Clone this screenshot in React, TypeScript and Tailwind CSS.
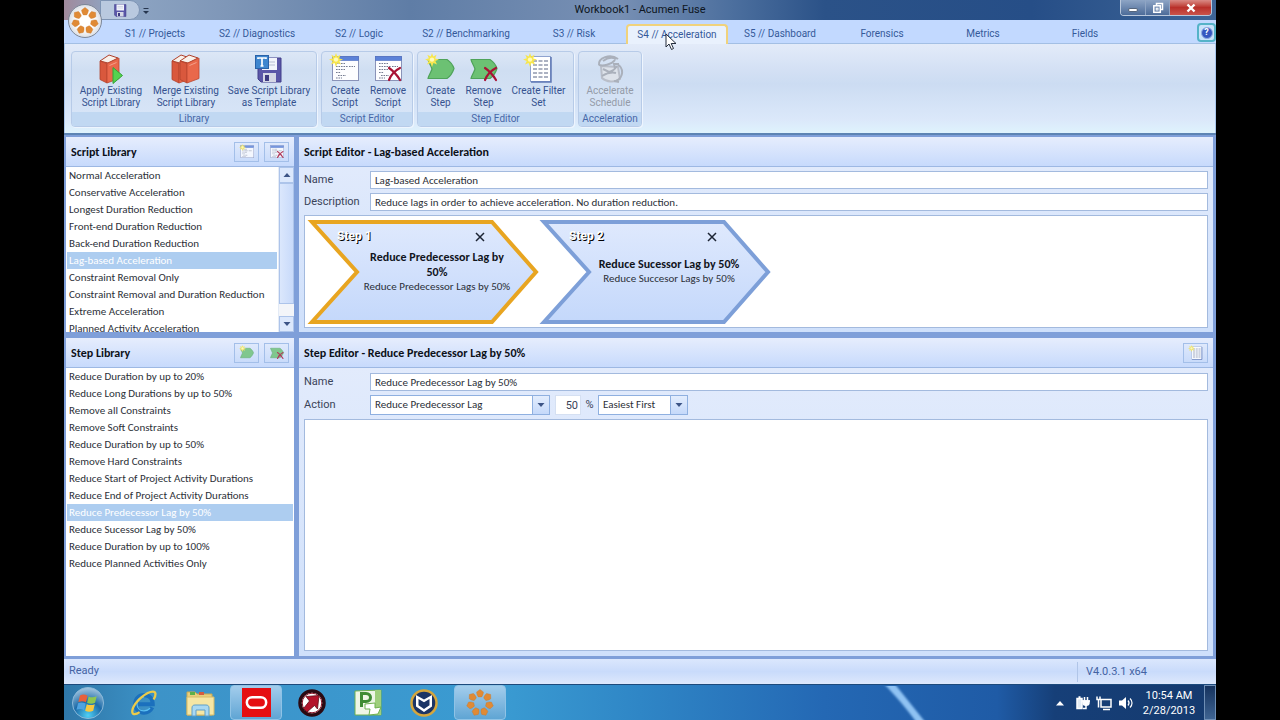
import type { ReactNode } from "react";

const PETALS = [0, 1, 2, 3, 4, 5, 6];

function AcumenMark({ className }: { className: string }) {
  return (
    <svg viewBox="0 0 32 32" className={className} aria-hidden="true">
      {PETALS.map((i) => (
        <path
          key={i}
          d="M16 1.500l3.600 2.700c0 2-.6 3.600-1.800 5.300h-3.600c-1.200-1.700-1.800-3.300-1.800-5.300z"
          fill="#e08a35"
          stroke="#c97526"
          strokeWidth=".4"
          strokeLinejoin="round"
          transform={`rotate(${(i * 360) / 7} 16 16)`}
        />
      ))}
    </svg>
  );
}

function Spark() {
  return (
    <g>
      <path
        d="M7 0l1.300 3.600L11.500 1.800 10.200 5.400 14 6.500l-3.600 1.400 1.600 3.600-3.600-1.500L7 14l-1.400-4L2 11.500l1.700-3.600L0 6.500l3.800-1.200L2.300 1.800l3.400 1.800z"
        fill="#f7e64e"
      />
      <circle cx="7" cy="6.600" r="2.200" fill="#fffbb8" />
    </g>
  );
}

function Cross() {
  return (
    <path
      d="M17 15c3 2 8 7 11 12M28 15c-4 2-9 7-11 12"
      stroke="#a81235"
      strokeWidth="2.200"
      fill="none"
      strokeLinecap="round"
    />
  );
}

function Book({ x = 0 }: { x?: number }) {
  return (
    <g transform={`translate(${x} 0)`}>
      <path d="M5 8l9-6 9 3-10 5z" fill="#f8f1ea" stroke="#b0412c" strokeWidth="1" />
      <path d="M5 8l7 2.500V30l-7-3.500z" fill="#d9583d" stroke="#b0412c" strokeWidth=".8" />
      <path d="M12 10.500L24 5v20.500L12 30z" fill="#e9684b" stroke="#bc4730" strokeWidth=".8" />
      <path d="M14.500 12.500l7-3" stroke="#f3a08a" strokeWidth="1" />
    </g>
  );
}

function Icon({ size, children }: { size: string; children: ReactNode }) {
  return (
    <svg viewBox="0 0 32 32" className={size} aria-hidden="true">
      {children}
    </svg>
  );
}

function ScriptWindow() {
  return (
    <g>
      <rect x="3.500" y="3.500" width="26" height="24" fill="#fdfdff" stroke="#8a93b8" />
      <rect x="3.500" y="3.500" width="26" height="4" fill="#5c82d8" stroke="#4a6cc0" strokeWidth=".6" />
      <path
        d="M7 10.500h9M7 13.500h12M7 16.500h9M7 19.500h5M9 22.500h8M20 13.500h6M7 25h6"
        stroke="#747b91"
        strokeWidth="1.200"
        strokeDasharray="1.600 .9"
      />
    </g>
  );
}

function StepShape() {
  return (
    <path
      d="M3 6.500h19c3 2 6 6 7 9-1 3-4 8-7 10H3c1-4 3-6 4-9.500-1-3.500-3-5.500-4-9.500z"
      fill="#6cc173"
      stroke="#4fa35a"
      strokeWidth="1.200"
      strokeLinejoin="round"
    />
  );
}

function FilterSheet() {
  return (
    <g>
      <rect x="7.500" y="3.500" width="20" height="25" fill="#fff" stroke="#8fa3cf" />
      <path d="M28 4v25H8" stroke="#5f78b5" strokeWidth="1.500" fill="none" />
      <path
        d="M10 8h15M10 12h15M10 16h15M10 20h15M10 24h15"
        stroke="#5b6686"
        strokeWidth="1.200"
        strokeDasharray="4 1.500"
      />
    </g>
  );
}

function Floppy() {
  return (
    <g>
      <path d="M5 5h23v24H8l-3-3z" fill="#5b57a8" stroke="#433f8a" />
      <rect x="9" y="5" width="15" height="12" fill="#f2f4fb" />
      <path d="M11 9h11M11 12h11" stroke="#b6bdd2" />
      <rect x="10" y="20" width="13" height="9" fill="#d5d8e6" />
      <rect x="12" y="22" width="4" height="6" fill="#3d3a80" />
    </g>
  );
}

const icons: Record<string, ReactNode> = {
  apply: (
    <g>
      <Book />
      <path d="M18 14.500l9.500 8-9.500 8z" fill="#55d24f" stroke="#35a338" />
    </g>
  ),
  merge: (
    <g>
      <Book x={-3} />
      <Book x={5} />
    </g>
  ),
  template: (
    <g>
      <Floppy />
      <rect x="2.500" y="2.500" width="13" height="13" fill="#3e86cf" stroke="#2a62a8" />
      <path d="M5 6V5h8v1M9 5v8M7.500 13h3" stroke="#fff" strokeWidth="1.700" fill="none" />
    </g>
  ),
  createScript: (
    <g>
      <ScriptWindow />
      <Spark />
    </g>
  ),
  removeScript: (
    <g>
      <ScriptWindow />
      <Cross />
    </g>
  ),
  createStep: (
    <g>
      <StepShape />
      <Spark />
    </g>
  ),
  removeStep: (
    <g>
      <StepShape />
      <Cross />
    </g>
  ),
  filter: (
    <g>
      <FilterSheet />
      <Spark />
    </g>
  ),
  accelerate: (
    <g fill="none" stroke="#aab0bb" strokeWidth="2">
      <path d="M7 13l1 12c4 4 13 5 18 1l-2-12z" fill="#dde2ea" stroke="#b9bec9" />
      <path d="M5 12C4 5 16 0 24 6M5 12c4 1 12 0 16-5M9 8c4-3 9-4 13-2" />
      <path d="M9 16l6 3c4-1 6-3 8-6M8 23c5-3 10-4 14-3" />
      <path d="M23 11c7 4 7 13-1 17M20 28l5 1M25 11h-5l1 4" />
    </g>
  ),
};

const tabs = [
  { label: "S1 // Projects", width: "w-[102px]" },
  { label: "S2 // Diagnostics", width: "w-[102px]" },
  { label: "S2 // Logic", width: "w-[102px]" },
  { label: "S2 // Benchmarking", width: "w-[112px]" },
  { label: "S3 // Risk", width: "w-[104px]" },
  { label: "S4 // Acceleration", width: "w-[102px]", active: true },
  { label: "S5 // Dashboard", width: "w-[104px]" },
  { label: "Forensics", width: "w-[100px]" },
  { label: "Metrics", width: "w-[102px]" },
  { label: "Fields", width: "w-[102px]" },
];

const groups = [
  {
    title: "Library",
    width: "w-[246px]",
    items: [
      { icon: "apply", lines: ["Apply Existing", "Script Library"], width: "w-[74px]" },
      { icon: "merge", lines: ["Merge Existing", "Script Library"], width: "w-[76px]" },
      { icon: "template", lines: ["Save Script Library", "as Template"], width: "w-[90px]" },
    ],
  },
  {
    title: "Script Editor",
    width: "w-[92px]",
    items: [
      { icon: "createScript", lines: ["Create", "Script"], width: "w-[42px]" },
      { icon: "removeScript", lines: ["Remove", "Script"], width: "w-[44px]" },
    ],
  },
  {
    title: "Step Editor",
    width: "w-[157px]",
    items: [
      { icon: "createStep", lines: ["Create", "Step"], width: "w-[42px]" },
      { icon: "removeStep", lines: ["Remove", "Step"], width: "w-[44px]" },
      { icon: "filter", lines: ["Create Filter", "Set"], width: "w-[66px]" },
    ],
  },
  {
    title: "Acceleration",
    width: "w-[64px]",
    items: [
      { icon: "accelerate", lines: ["Accelerate", "Schedule"], width: "w-[58px]", disabled: true },
    ],
  },
];

const scripts = [
  "Normal Acceleration",
  "Conservative Acceleration",
  "Longest Duration Reduction",
  "Front-end Duration Reduction",
  "Back-end Duration Reduction",
  "Lag-based Acceleration",
  "Constraint Removal Only",
  "Constraint Removal and Duration Reduction",
  "Extreme Acceleration",
  "Planned Activity Acceleration",
];

const steps = [
  "Reduce Duration by up to 20%",
  "Reduce Long Durations by up to 50%",
  "Remove all Constraints",
  "Remove Soft Constraints",
  "Reduce Duration by up to 50%",
  "Remove Hard Constraints",
  "Reduce Start of Project Activity Durations",
  "Reduce End of Project Activity Durations",
  "Reduce Predecessor Lag by 50%",
  "Reduce Sucessor Lag by 50%",
  "Reduce Duration by up to 100%",
  "Reduce Planned Activities Only",
];

function TitleBar() {
  return (
    <div className="relative flex h-5 items-center justify-center bg-[linear-gradient(to_right,#a08a9c_0,#8fa6c4_4%,#7f97b8_14%,#5f7da6_30%,#7890b4_48%,#4c6f9e_58%,#2b5288_66%,#264e87_84%,#3e6597_100%)]">
      <div className="absolute left-9 top-0 flex h-5 w-10 items-center justify-center rounded-r-full border border-[#7e94b4] bg-[#b9c9df]">
        <button aria-label="Save" className="flex">
          <Icon size="size-4">
            <Floppy />
          </Icon>
        </button>
      </div>
      <button aria-label="Customize toolbar" className="absolute left-[77px] top-1.5 flex">
        <svg viewBox="0 0 10 10" className="size-2.5" aria-hidden="true">
          <path d="M2.500 2.500h5" stroke="#26364f" />
          <path d="M2 5h6L5 8z" fill="#26364f" />
        </svg>
      </button>
      <h1 className="text-[11px] leading-5 text-[#0d1520]">Workbook1 - Acumen Fuse</h1>
      <div className="absolute right-1 top-0 flex h-4 overflow-hidden rounded-b border border-t-0 border-[#b9c8dc]">
        <button aria-label="Minimize" className="flex w-[25px] items-center justify-center border-r border-[#8fa5c4] bg-linear-to-b from-[#8ea5c5] to-[#4d6c99]">
          <span className="mt-1 h-1 w-2.5 rounded-sm border border-[#55657c] bg-white" />
        </button>
        <button aria-label="Restore" className="flex w-6 items-center justify-center border-r border-[#8fa5c4] bg-linear-to-b from-[#8ea5c5] to-[#4d6c99]">
          <svg viewBox="0 0 12 12" className="size-3" fill="none" stroke="#fff" strokeWidth="1.500" aria-hidden="true">
            <path d="M4.500 3.500v-2h6v6h-2" />
            <rect x="1.800" y="3.800" width="6.500" height="6.500" />
            <rect x="4.200" y="6.200" width="1.800" height="1.800" strokeWidth="1" />
          </svg>
        </button>
        <button aria-label="Close" className="flex w-[41px] items-center justify-center bg-linear-to-b from-[#d98a86] via-[#b92f2a] to-[#c9534a]">
          <svg viewBox="0 0 12 12" className="size-3" aria-hidden="true">
            <path d="M2.500 2.500l7 7M9.500 2.500l-7 7" stroke="#fff" strokeWidth="2.400" />
          </svg>
        </button>
      </div>
      <button
        aria-label="Application menu"
        className="absolute left-1 top-1 z-10 flex size-[34px] items-center justify-center rounded-full border border-[#7d8798] bg-radial from-white from-40% to-[#bdc4d0]"
      >
        <AcumenMark className="size-[30px]" />
      </button>
    </div>
  );
}

function TabStrip() {
  return (
    <nav className="relative flex h-6 shrink-0 items-end border-b border-[#a3bfe4] bg-[#c2d9ff] pl-10">
      {tabs.map((t) => (
        <button
          key={t.label}
          className={`${t.width} -mb-px whitespace-nowrap text-center text-[10px] text-[#35599a] ${
            t.active
              ? "relative h-5 rounded-t border-2 border-b-0 border-[#f0d27c] bg-[#e9f1fd] leading-4"
              : "h-5 leading-5"
          }`}
        >
          {t.label}
          {t.active && (
            <svg viewBox="0 0 12 18" className="absolute left-[37px] top-[7px] z-20 h-[18px] w-3" aria-hidden="true">
              <path d="M1 1v13l3-3 2.500 5.500 2-1-2.300-5H11z" fill="#fff" stroke="#222b3a" />
            </svg>
          )}
        </button>
      ))}
      <button
        aria-label="Help"
        className="absolute right-0 top-[3px] flex size-[19px] items-center justify-center rounded-sm border-2 border-[#55b3c8] bg-[#c9e2fa]"
      >
        <span className="flex size-3 items-center justify-center rounded-full border border-[#8fa9e0] bg-[#3557c0] text-[9px] font-bold leading-none text-white">
          ?
        </span>
      </button>
    </nav>
  );
}

function Ribbon() {
  return (
    <div className="shrink-0 border-x border-[#a9c6ec] bg-[linear-gradient(to_bottom,#e3ebf9_0,#d3e0f4_30%,#ccdcf2_45%,#dbe8fa_85%,#dff3fd_100%)] px-1.5 pb-1.5 pt-[7px]">
      <div className="flex gap-1">
        {groups.map((g) => (
          <section
            key={g.title}
            className={`${g.width} overflow-hidden rounded border border-[#b7cbe8] bg-[linear-gradient(to_bottom,#dce7f6_0,#cfdef2_25%,#d9e6f8_100%)] shadow-[1px_1px_0_#eef5fe]`}
          >
            <div className="flex h-[60px] justify-center">
              {g.items.map((b) => (
                <button
                  key={b.lines.join(" ")}
                  disabled={"disabled" in b}
                  className={`${b.width} flex flex-col items-center whitespace-nowrap text-[10px] leading-3 ${
                    "disabled" in b ? "text-[#949ba8]" : "text-[#35528f]"
                  }`}
                >
                  <Icon size="mt-px size-8">{icons[b.icon]}</Icon>
                  <span>{b.lines[0]}</span>
                  <span>{b.lines[1]}</span>
                </button>
              ))}
            </div>
            <h2 className="h-[14px] bg-[#c1d8f2] text-center text-[10px] leading-[14px] text-[#4767a8]">{g.title}</h2>
          </section>
        ))}
      </div>
    </div>
  );
}

function Panel({ title, actions, children }: { title: string; actions?: ReactNode; children: ReactNode }) {
  return (
    <section className="flex min-h-0 min-w-0 flex-col overflow-hidden bg-linear-to-b from-[#e4ecfc] to-[#cfe0fb]">
      <header className="flex h-[30px] shrink-0 items-center gap-[5px] border-b border-[#9db8e3] bg-linear-to-b from-[#e6edfd] to-[#c7dafc] px-[5px]">
        <h2 className="grow font-[Carlito,Lato,sans-serif] text-[12px] font-bold text-[#0c1018]">{title}</h2>
        {actions}
      </header>
      {children}
    </section>
  );
}

function ToolButton({ label, icon }: { label: string; icon: string }) {
  return (
    <button
      aria-label={label}
      className="flex h-5 w-[25px] items-center justify-center border border-[#a3bfe9] bg-linear-to-b from-[#dfe9fc] to-[#c9dbfa]"
    >
      <Icon size="size-4 opacity-80">{icons[icon]}</Icon>
    </button>
  );
}

function List({ items, selected }: { items: string[]; selected: string }) {
  return (
    <ul className="min-w-0 grow overflow-hidden bg-white px-px font-[Carlito,Lato,sans-serif] text-[11px] leading-[17px] text-[#2c3038]">
      {items.map((s, i) => (
        <li key={i} className={`whitespace-nowrap pl-0.5 ${s === selected ? "bg-[#adcdf0] text-white" : ""}`}>
          {s}
        </li>
      ))}
    </ul>
  );
}

function Arrow({ up = false }: { up?: boolean }) {
  return (
    <svg viewBox="0 0 8 6" className={`h-1.5 w-2 ${up ? "rotate-180" : ""}`} aria-hidden="true">
      <path d="M.500 1h7L4 5z" fill="#3c5486" />
    </svg>
  );
}

function ScrollBar() {
  return (
    <div className="flex w-4 shrink-0 flex-col border-l border-[#e4ebf6] bg-[#f3f5f9]">
      <button aria-label="Scroll up" className="flex h-4 shrink-0 items-center justify-center border border-[#adc4ea] bg-[#dce8fc]">
        <Arrow up />
      </button>
      <div className="h-[121px] border border-[#adc4ea] bg-linear-to-r from-[#dbe7fc] to-[#c8dafa]" />
      <div className="grow" />
      <button aria-label="Scroll down" className="flex h-4 shrink-0 items-center justify-center border border-[#adc4ea] bg-[#dce8fc]">
        <Arrow />
      </button>
    </div>
  );
}

function StepCard({ name, title, note, color }: { name: string; title: string; note: string; color: string }) {
  return (
    <article className="relative flex h-[104px] w-[232px] items-center">
      <svg viewBox="0 0 232 104" className="absolute inset-0 size-full" aria-hidden="true">
        <defs>
          <linearGradient id="stepFill" x1="0" y1="0" x2="0" y2="1">
            <stop offset="0" stopColor="#dfe9fd" />
            <stop offset="1" stopColor="#c4d8fb" />
          </linearGradient>
        </defs>
        <path d="M5 2h180l44 50-44 50H5l45-50z" fill="url(#stepFill)" stroke={color} strokeWidth="4" />
      </svg>
      <h3 className="absolute left-[30px] top-2 text-[12px] font-bold leading-4 text-white [text-shadow:1px_1px_0_#000]">
        {name}
      </h3>
      <button aria-label={`Delete ${name}`} className="absolute left-[168px] top-3 flex">
        <svg viewBox="0 0 10 10" className="size-2.5" aria-hidden="true">
          <path d="M1 1l8 8M9 1L1 9" stroke="#1c2433" strokeWidth="1.500" />
        </svg>
      </button>
      <div className="relative ml-[54px] w-[152px] text-center font-[Carlito,Lato,sans-serif]">
        <p className="text-[12px] font-bold leading-[15px] text-[#10141c]">{title}</p>
        <p className="whitespace-nowrap text-[11px] leading-[14px] text-[#2c3038]">{note}</p>
      </div>
    </article>
  );
}

const labelClass = "w-[66px] shrink-0 text-[11px] text-[#3a4358]";
const fieldClass =
  "h-[18px] min-w-0 grow border border-[#a3bade] bg-white px-1 font-[Carlito,Lato,sans-serif] text-[11px] leading-4 text-[#2c3038]";

function Combo({ id, label, value, width }: { id: string; label: string; value: string; width: string }) {
  return (
    <div className={`relative flex h-5 ${width}`}>
      <select
        id={id}
        aria-label={label}
        defaultValue={value}
        className="h-5 w-full appearance-none border border-[#8fb0e0] bg-white px-1 py-0 font-[Carlito,Lato,sans-serif] text-[11px] leading-4 text-[#2c3038]"
      >
        <option>{value}</option>
      </select>
      <span className="pointer-events-none absolute inset-y-0 right-0 flex w-[18px] items-center justify-center border border-[#8fb0e0] bg-linear-to-b from-[#e3edfd] to-[#c5d9fa]">
        <Arrow />
      </span>
    </div>
  );
}

function Workspace() {
  return (
    <main className="grid min-h-0 grow grid-cols-[228px_1fr] grid-rows-[195px_1fr] gap-x-[5px] gap-y-1.5 border-t-2 border-[#5d84b4] bg-[#7f9fd9] pb-[3px] pl-0.5 pr-[3px] pt-0.5">
      <Panel
        title="Script Library"
        actions={
          <>
            <ToolButton label="Create script" icon="createScript" />
            <ToolButton label="Remove script" icon="removeScript" />
          </>
        }
      >
        <div className="flex min-h-0 grow">
          <List items={scripts} selected="Lag-based Acceleration" />
          <ScrollBar />
        </div>
      </Panel>

      <Panel title="Script Editor - Lag-based Acceleration">
        <div className="flex min-h-0 grow flex-col gap-1 px-[5px] py-1">
          <div className="flex items-center">
            <label htmlFor="script-name" className={labelClass}>Name</label>
            <input id="script-name" className={fieldClass} defaultValue="Lag-based Acceleration" />
          </div>
          <div className="flex items-center">
            <label htmlFor="script-description" className={labelClass}>Description</label>
            <input
              id="script-description"
              className={fieldClass}
              defaultValue="Reduce lags in order to achieve acceleration. No duration reduction."
            />
          </div>
          <div className="flex min-h-0 grow items-center border border-[#a3bade] bg-white pl-0.5">
            <StepCard
              name="Step 1"
              title="Reduce Predecessor Lag by 50%"
              note="Reduce Predecessor Lags by 50%"
              color="#e8a521"
            />
            <StepCard
              name="Step 2"
              title="Reduce Sucessor Lag by 50%"
              note="Reduce Succesor Lags by 50%"
              color="#7d9fd8"
            />
          </div>
        </div>
      </Panel>

      <Panel
        title="Step Library"
        actions={
          <>
            <ToolButton label="Create step" icon="createStep" />
            <ToolButton label="Remove step" icon="removeStep" />
          </>
        }
      >
        <List items={steps} selected="Reduce Predecessor Lag by 50%" />
      </Panel>

      <Panel
        title="Step Editor - Reduce Predecessor Lag by 50%"
        actions={<ToolButton label="Create filter set" icon="filter" />}
      >
        <div className="flex min-h-0 grow flex-col gap-1 p-[5px]">
          <div className="flex items-center">
            <label htmlFor="step-name" className={labelClass}>Name</label>
            <input id="step-name" className={fieldClass} defaultValue="Reduce Predecessor Lag by 50%" />
          </div>
          <div className="flex items-center">
            <label htmlFor="step-action" className={labelClass}>Action</label>
            <Combo id="step-action" label="Action" value="Reduce Predecessor Lag" width="w-[180px]" />
            <input
              aria-label="Percent"
              defaultValue="50"
              className="ml-[5px] h-5 w-[26px] border border-[#d5e0f2] bg-white pr-0.5 text-right text-[11px] text-[#3a4358]"
            />
            <span className="w-[17px] text-center text-[11px] text-[#3a4358]">%</span>
            <Combo id="step-order" label="Order" value="Easiest First" width="w-[90px]" />
          </div>
          <div className="grow border border-[#a3bade] bg-white" />
        </div>
      </Panel>
    </main>
  );
}

function StatusBar() {
  return (
    <footer className="flex h-[25px] shrink-0 items-center bg-linear-to-b from-[#dbe7fd] via-[#c9dbfb] to-[#dde8fc] text-[11px] text-[#4463a3]">
      <span className="grow pl-[5px]">Ready</span>
      <span className="h-5 w-[139px] border-l border-[#b0c5e8] pl-2 leading-5">V4.0.3.1 x64</span>
    </footer>
  );
}

function TaskButton({ label, open = false, children }: { label: string; open?: boolean; children: ReactNode }) {
  return (
    <button
      aria-label={label}
      className={`flex h-[35px] w-[52px] items-center justify-center rounded-sm border ${
        open ? "border-[#8fc3e6] bg-linear-to-b from-[#a3cdec] to-[#5fa5d4]" : "border-transparent"
      }`}
    >
      {children}
    </button>
  );
}

function Taskbar() {
  return (
    <div className="flex h-9 shrink-0 items-center gap-1 border-t border-[#1d4a7c] bg-[linear-gradient(to_right,#2f77a8_0,#3d93c8_8%,#3a9bd2_38%,#2f86c6_50%,#2468b4_66%,#1f5ba6_81%,#163f78_86%,#153a6e_100%)]">
      <button aria-label="Start" className="mr-0.5 flex w-12 items-center justify-center">
        <svg viewBox="0 0 36 36" className="size-[34px]" aria-hidden="true">
          <defs>
            <radialGradient id="orb" cx=".5" cy=".9" r=".9">
              <stop offset="0" stopColor="#4fd0f5" />
              <stop offset=".5" stopColor="#1d6ba8" />
              <stop offset="1" stopColor="#a8c8e0" />
            </radialGradient>
          </defs>
          <circle cx="18" cy="18" r="16.500" fill="url(#orb)" stroke="#8bb9d9" />
          <path d="M9.500 10c3-1.500 5.500-1 8 .3l-1.700 7c-2.500-1.300-5-1.500-8-.3z" fill="#e8603a" />
          <path d="M18.700 11c2.500 1.200 5.500 1.300 8.500-.2l-1.700 7c-3 1.500-6 1.300-8.500 0z" fill="#8fc650" />
          <path d="M7.500 18.200c3-1.200 5.300-1 8 .4l-1.700 7c-2.500-1.500-5-1.500-8-.4z" fill="#4fa3e0" />
          <path d="M16.700 19.200c2.500 1.300 5.300 1.400 8.500 0l-1.700 7c-3 1.400-6 1.200-8.500 0z" fill="#f7c840" />
        </svg>
      </button>
      <TaskButton label="Internet Explorer">
        <svg viewBox="0 0 32 32" className="size-7" fill="none" aria-hidden="true">
          <path d="M25.500 21c-2 4-5.500 6-9.500 6-6 0-10-4.300-10-10S10 7 16 7s10 4 10 10.500H8" stroke="#1b70bd" strokeWidth="4.600" />
          <path d="M23 22c-2 2-4 3-7 3-5 0-8-3.500-8-8s3-8 8-8" stroke="#5bc0f2" strokeWidth="1.300" />
          <path d="M27 12c3-5 3-9-1-9C19 3 6 14 3 23c-2 7 3 7 8 3.500" stroke="#eccb4a" strokeWidth="2.600" />
        </svg>
      </TaskButton>
      <TaskButton label="File Explorer">
        <svg viewBox="0 0 32 32" className="size-8" aria-hidden="true">
          <path d="M3 5h8l2 2h15v21H3z" fill="#e9cf7c" stroke="#c9a950" />
          <path d="M6 5h5v3H6z" fill="#5cb04a" />
          <path d="M15 5h5v3h-5z" fill="#d45c40" />
          <path d="M3 10h27v18H3z" fill="#f6e6a4" stroke="#d6ba66" />
          <path d="M8 29v-8c0-2 1-3 3-3h11c2 0 3 1 3 3v8h-4v-6h-9v6z" fill="#a9d8f2" stroke="#5f9fc9" />
        </svg>
      </TaskButton>
      <TaskButton label="Oracle" open>
        <svg viewBox="0 0 30 30" className="size-[29px]" aria-hidden="true">
          <rect width="30" height="30" fill="#e50f12" />
          <rect x="5" y="9.500" width="20" height="11" rx="5.500" fill="none" stroke="#fff" strokeWidth="2.600" />
        </svg>
      </TaskButton>
      <TaskButton label="Risk">
        <svg viewBox="0 0 32 32" className="size-8" aria-hidden="true">
          <circle cx="16" cy="16" r="12" fill="#fff" stroke="#2b0a12" strokeWidth="3.500" />
          <circle cx="16" cy="16" r="9.800" fill="none" stroke="#8c1a2c" strokeWidth="1" />
          <path d="M10 9.500l13-1L21.500 22l-3-3.500-7.500 6.500-3.500-3.500 6-7.500z" fill="#b3122a" stroke="#5b0b18" strokeWidth=".8" />
        </svg>
      </TaskButton>
      <TaskButton label="Project">
        <svg viewBox="0 0 32 32" className="size-8" aria-hidden="true">
          <path d="M3 4l26-1v25L3 28z" fill="#eef6e6" stroke="#6fb050" />
          <path d="M23 3h6v25h-6z" fill="#9fcf7c" />
          <path d="M9.500 20V6.500H14c6 0 6 8 0 8H9.500" fill="none" stroke="#3f8c34" strokeWidth="3" />
          <path d="M13 17l10-1v5l6-1-3 7-9 1 1-6h-5z" fill="#fff" stroke="#6fb050" />
        </svg>
      </TaskButton>
      <TaskButton label="Reader">
        <svg viewBox="0 0 32 32" className="size-8" aria-hidden="true">
          <circle cx="16" cy="16" r="12.500" fill="#1c3566" stroke="#d5a63c" strokeWidth="2.500" />
          <path d="M8 8l8 4.500L24 8v11.500L16 25l-8-5.500z" fill="#fff" />
          <path d="M10.500 12l5.500 3.200 5.500-3.200v6.300L16 22l-5.500-3.700z" fill="#1c3566" />
        </svg>
      </TaskButton>
      <TaskButton label="Acumen Fuse" open>
        <AcumenMark className="size-[30px]" />
      </TaskButton>
      <svg viewBox="0 0 60 34" className="ml-auto h-[34px] w-[60px]" aria-hidden="true">
        <defs>
          <filter id="glow" x="-20%" y="-20%" width="140%" height="140%">
            <feGaussianBlur stdDeviation="1.200" />
          </filter>
        </defs>
        <path d="M1-3h11l32 40H35C24 22 14 10 1-3z" fill="#8fc2f3" filter="url(#glow)" />
      </svg>
      <div className="ml-[106px] flex items-center gap-1.5 text-white">
        <button aria-label="Show hidden icons" className="flex w-4 justify-center">
          <svg viewBox="0 0 8 6" className="h-1.5 w-2" aria-hidden="true">
            <path d="M0 5.500h8L4 1z" fill="#fff" />
          </svg>
        </button>
        <svg viewBox="0 0 16 16" className="size-4" fill="none" stroke="#fff" strokeWidth="1.500" aria-hidden="true">
          <path d="M3 3.500h5v10H3zM4.500 2h2" fill="#e4ecf5" />
          <path d="M10.500 2v3.500M13.500 2v3.500M8 6h8" />
          <path d="M9 6h6v2c0 3-6 3-6 0z" fill="#fff" />
          <path d="M12 9.500v4H9" />
        </svg>
        <svg viewBox="0 0 16 16" className="size-4" fill="none" stroke="#fff" strokeWidth="1.500" aria-hidden="true">
          <path d="M5 4.500h10v7.500H5zM7 14.500h7M1 1.500v3h3v-3M2.500 4.500v8" />
        </svg>
        <svg viewBox="0 0 16 16" className="size-4" aria-hidden="true">
          <path d="M1 5.500h3L8 2v12l-4-3.500H1z" fill="#fff" />
          <path d="M10 5.500c1.300 1.500 1.300 3.500 0 5M12 3.500c2.700 2.500 2.700 6.500 0 9" fill="none" stroke="#fff" strokeWidth="1.200" />
        </svg>
      </div>
      <div className="w-[62px] text-center text-[11px] leading-[15px] text-white">
        <div>10:54 AM</div>
        <div>2/28/2013</div>
      </div>
      <button
        aria-label="Show desktop"
        className="h-[35px] w-3 border border-[#6f8fb5] bg-linear-to-b from-[#16335e] to-[#3f6492]"
      />
    </div>
  );
}

export default function App() {
  return (
    <div className="h-screen bg-black px-[5%] font-[Roboto,'Open_Sans',sans-serif]">
      <div className="flex h-full flex-col bg-[#c2d9ff]">
        <TitleBar />
        <TabStrip />
        <Ribbon />
        <Workspace />
        <StatusBar />
        <Taskbar />
      </div>
    </div>
  );
}
